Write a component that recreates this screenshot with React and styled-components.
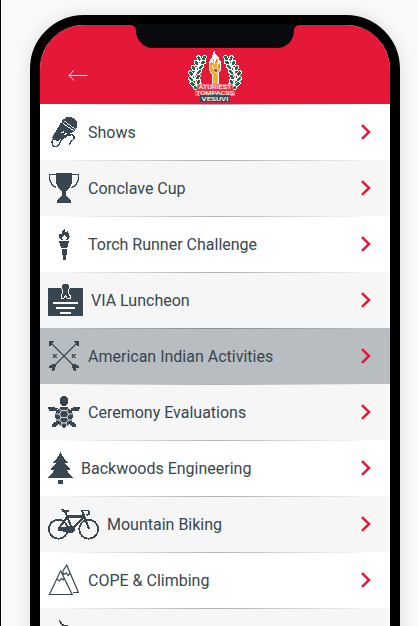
import styled, { createGlobalStyle, css } from 'styled-components';

const INK = '#374650';
const RED = '#e51937';

const MicIcon = () => (
  <Icon width="32" height="32" viewBox="0 0 32 32">
    <path d="M14 5 Q17 .8 21.5 1 Q28.6 1.4 29.2 8 Q29.2 12 26.6 14.6 L13.6 6 Z" />
    <path d="M13 6.4 L26 15.4 L20.8 18.4 L12 23.8 L10.6 25.4 L7 24.2 L4.2 21.4 Z" />
    <path d="M15.6 4.6 L26.8 12.8" stroke="#fff" strokeWidth="0.8" />
    <path d="M13.4 17 l3 -1.6 M16.4 18.8 l2.2 -1.2" stroke="#fff" strokeWidth="1.3" />
    <path
      d="M5.6 21.5 L4 26 Q4 31 8.4 30.4 Q11.6 29.6 12.2 25.8 Q13 23.6 19.6 19.6 Q25.6 17.4 26.4 21 Q26 24 22.6 26 L20.8 29.4"
      fill="none"
      stroke={INK}
      strokeWidth="1.3"
    />
  </Icon>
);

const CupIcon = () => (
  <Icon width="32" height="32" viewBox="0 0 32 32">
    <path d="M8 1 H24 V10 Q23 16 18 19 V23 L20 26 L23 28.5 V31 H9 V28.5 L12 26 L14 23 V19 Q9 16 8 10 Z" />
    <path
      d="M8 2.5 H1.5 V6 Q2 13 8.5 15.5 M24 2.5 H30.5 V6 Q30 13 23.5 15.5"
      fill="none"
      stroke={INK}
      strokeWidth="1.3"
    />
  </Icon>
);

const TorchIcon = () => (
  <Icon width="32" height="32" viewBox="0 0 32 32">
    <path d="M17.2 0 Q15.6 3 18 4.5 Q20 4 19 2.5 Q22 6 21.6 9 Q20.8 12 17.6 12.6 Q20.4 10 17 7 Q12.4 9.5 15.4 12.6 Q10.4 11.6 10.8 7.5 L12.2 5.4 L13.4 7 Q13.4 3 17.2 0 Z" />
    <path d="M11 13.4 H21 V15.4 H20.4 V17 L19 19.8 H13.2 L11.8 17 V15.4 H11 Z" />
    <path d="M13.6 20.5 H18.6 V26.5 H17.6 V32 H15 V26.5 H13.6 Z" />
  </Icon>
);

const CardIcon = () => (
  <Icon width="35" height="32" viewBox="0 0 35 32">
    <path d="M0 4 H35 V32 H0 Z" />
    <path
      d="M17.5 0 Q21.5 .3 21.5 4 L20.4 6.5 L20.6 9 L22 11.5 V14.5 H19.7 L17.5 12 L15.3 14.5 H13 V11.5 L14.4 9 L14.6 6.5 L13.5 4 Q13.5 .3 17.5 0 Z"
      stroke="#f6f6f6"
      strokeWidth="1"
    />
    <path d="M13.5 4 Q13.4 .3 17.5 0 Q21.6 .3 21.5 4 Z" />
    <path d="M5 19 H30 M8 24 H27 M12 29 H23" stroke="#fff" strokeWidth="1.8" />
  </Icon>
);

const ArrowsIcon = () => (
  <Icon width="32" height="32" viewBox="0 0 32 32">
    <path d="M1 1 H6.5 L4.8 3 L3 5.8 H1 Z M31 1 H25.5 L27.2 3 L29 5.8 H31 Z" />
    <path d="M1.5 26 L6.2 23.4 L8.4 25.4 L6.6 29.6 L4.4 31.5 V28 H1 Z M30.5 26 L25.8 23.4 L23.6 25.4 L25.4 29.6 L27.6 31.5 V28 H31 Z" />
    <path d="M3 3 L26.5 26.5 M29 3 L5.5 26.5" stroke={INK} strokeWidth="1.1" shapeRendering="auto" />
    <path
      d="M5.2 14.2 l3.6 3.6 m0 -3.6 l-3.6 3.6 M24 14.2 l3.6 3.6 m0 -3.6 l-3.6 3.6"
      stroke={INK}
      strokeWidth="1.5"
      shapeRendering="auto"
    />
  </Icon>
);

const TurtleIcon = () => (
  <Icon width="32" height="32" viewBox="0 0 32 32">
    <path d="M16 0 Q20.2 .5 20.2 4.5 Q20.2 9.5 16 10.2 Q11.8 9.5 11.8 4.5 Q11.8 .5 16 0 Z" />
    <path d="M0 11 L5 10.5 L9.5 12.5 L8.5 15.6 L4.5 14.8 L1 15 Z M32 11 L27 10.5 L22.5 12.5 L23.5 15.6 L27.5 14.8 L31 15 Z" />
    <path d="M3.6 31.4 L4.6 27.5 L8.5 25.2 L10.6 27.2 L8 30.4 Z M28.4 31.4 L27.4 27.5 L23.5 25.2 L21.4 27.2 L24 30.4 Z" />
    <path d="M13 11 H19 Q25.5 14.5 24.8 21 Q24 28 16 32 Q8 28 7.2 21 Q6.5 14.5 13 11 Z" />
    <path
      d="M10 11.5 L13.5 14.5 H18.5 L22 11.5 M13.5 14.5 L11.5 18 L13 21.5 H19 L20.5 18 L18.5 14.5 M11.5 18 H7 M20.5 18 H25 M13 21.5 L11.5 24 L14 27 H18 L20.5 24 L19 21.5 M11.5 24 L7.5 24 M20.5 24 H25 M14 27 L12.5 30.5 M18 27 L19.5 30.5"
      fill="none"
      stroke="#f6f6f6"
      strokeWidth="0.9"
      shapeRendering="auto"
    />
  </Icon>
);

const TreeIcon = () => (
  <Icon width="25" height="32" viewBox="0 0 25 32">
    <path d="M12.5 0 L14.4 4 L17.4 8 L20.6 10.4 L17 11.4 L19 14 L22.8 17.4 L19 18.4 L21.4 22 L25 25.6 H0 L3.6 22 L6 18.4 L2.2 17.4 L6 14 L8 11.4 L4.4 10.4 L7.6 8 L10.6 4 Z" />
    <path d="M10 28 H15 V32 H10 Z" />
  </Icon>
);

const BikeIcon = () => (
  <Icon width="51" height="32" viewBox="0 0 51 32">
    <g fill="none" stroke={INK} strokeWidth="1.8">
      <circle cx="10.3" cy="21.2" r="9.5" />
      <circle cx="40.7" cy="21.2" r="9.5" />
      <path d="M17 3 L24.5 22 M18.5 8.5 H35.5 M10.3 21 L18.8 9.5 M24 21.5 L36 8.8 M34 2.8 L41 21" strokeWidth="2.1" />
      <path d="M33 2.5 H39.5 Q42.3 3.2 41 6 L38.5 7" />
    </g>
    <path d="M13 1.2 L20.5 2 V3.6 H14.5 Z" />
    <path d="M9.6 20 L22 18 Q26 18 26.8 21 Q26.8 25 23 25 L9.6 22.6 Z" />
  </Icon>
);

const MountainIcon = () => (
  <Icon width="32" height="32" viewBox="0 0 32 32">
    <path
      d="M1.4 30.5 L12.6 6.8 L24.2 30.5 Z M14.8 6.8 L18.8 1.2 L30.4 28.5 H25 M8.8 15 L11.5 17 L13.2 14.5 L15.5 15.8 L16.2 13.5 M14.8 7 L15.5 10.5 L18.2 9 L20 11.5 L22.2 9"
      fill="none"
      stroke={INK}
      strokeWidth="1.2"
      shapeRendering="auto"
    />
  </Icon>
);

const HookIcon = () => (
  <Icon width="32" height="32" viewBox="0 0 32 32">
    <path d="M11.4 0.5 L14 4.4 Q16 6 20 5.6" fill="none" stroke={INK} strokeWidth="1.5" />
  </Icon>
);

const items = [
  { label: 'Shows', icon: MicIcon },
  { label: 'Conclave Cup', icon: CupIcon },
  { label: 'Torch Runner Challenge', icon: TorchIcon },
  { label: 'VIA Luncheon', icon: CardIcon },
  { label: 'American Indian Activities', icon: ArrowsIcon, active: true },
  { label: 'Ceremony Evaluations', icon: TurtleIcon },
  { label: 'Backwoods Engineering', icon: TreeIcon },
  { label: 'Mountain Biking', icon: BikeIcon },
  { label: 'COPE & Climbing', icon: MountainIcon },
  { label: '', icon: HookIcon },
];

// x, y, angle of the leaves on the left branch
const leaves = [
  [16, 8, 30], [11, 8.5, -20], [15, 12.5, 60], [8.5, 13, -30], [13, 17, 50],
  [5.5, 18, -30], [11, 22, 40], [3, 23.5, -30], [10, 27, 30], [3, 29, -40],
  [10.5, 32, 20], [4.5, 34, -50], [12.5, 36, 0], [8, 38, -60],
];

const Branch = () => (
  <g>
    <path d="M17 8 Q0 22 11 41" fill="none" stroke="#fff" strokeWidth="1.4" />
    {leaves.map(([x, y, r]) => (
      <ellipse
        key={`${x}-${y}`}
        cx={x}
        cy={y}
        rx="1.9"
        ry="3"
        transform={`rotate(${r} ${x} ${y})`}
        fill="#087443"
        stroke="#fff"
        strokeWidth="1"
      />
    ))}
  </g>
);

const Logo = () => (
  <LogoSvg width="54" height="53" viewBox="0 0 54 53">
    <Branch />
    <g transform="translate(54 0) scale(-1 1)">
      <Branch />
    </g>
    <path d="M24 23 H30 V34 H24 Z" fill="#f0b323" stroke="#fff" strokeWidth="1" />
    <path d="M26 0 L28 5 L31 7 V10 L33 12 V20 L30 25 H24 L21 20 V12 L24 7 Z" fill="#fff" />
    <path d="M25 9 L28 11 L30 8 L30 14 L32 13 V20 L29 25 H25 L22 20 V14 L24 11 L25 15 Z" fill="#f7a828" />
    <path d="M26 9 V14 M29 13 V17 M24 15 V18" stroke="#fff" strokeWidth="1" />
    <path d="M28 9 V12 M31 15 V18 M23 13 V15" stroke="#f47b20" strokeWidth="1" />
    <path d="M25 18 H29 V22 H27 L25 20 Z" fill="#e33b35" stroke="#fff" strokeWidth="0.7" />
    <path d="M10 34 H44 L47 45 H7 Z" fill="#e8323f" stroke="#f5a9ad" strokeWidth="0.6" />
    <path d="M12 45 H18 Q27 43 36 45 H42 V52 H12 Z" fill="#3d4852" />
    <path d="M18 45.4 Q27 44 36 45.4" fill="none" stroke="#087443" strokeWidth="0.9" />
    <LogoText x="27" y="38.7" textLength="33">ATURIEST</LogoText>
    <LogoText x="27" y="44.7" textLength="38">TOMPACSS</LogoText>
    <LogoText x="27" y="50.9" textLength="27">VESUVI</LogoText>
  </LogoSvg>
);

const App = () => {
  return (
    <Page>
      <GlobalStyle />
      <Phone>
        <Notch />
        <Header>
          <BackButton aria-label="Back">
            <svg width="20" height="12" viewBox="0 0 20 12" fill="none" stroke="#fff">
              <path d="M1 6.5 H19.5 M6 1 L1 6.5 L6 11.5" />
            </svg>
          </BackButton>
          <Logo />
        </Header>
        <List>
          {items.map(({ label, icon: ItemIcon, active }) => (
            <Item key={label} $active={active}>
              <ItemIcon />
              <Label>{label}</Label>
              {label && (
                <Chevron width="12" height="16" viewBox="0 0 12 16">
                  <path d="M2 1.2 L9 8 L2 14.8" />
                </Chevron>
              )}
            </Item>
          ))}
        </List>
      </Phone>
    </Page>
  );
};

const GlobalStyle = createGlobalStyle`
  * {
    box-sizing: border-box;
  }
  body {
    margin: 0;
    overflow: hidden;
    font-family: Roboto, sans-serif;
  }
`;

const Page = styled.div`
  height: 626px;
  padding: 15px 18px 0 29px;
  border-left: 1px solid #000;
  background: #fafafa;
  overflow: hidden;
`;

const Phone = styled.div`
  position: relative;
  width: 370px;
  height: 750px;
  border: 10px solid #000;
  border-radius: 54px;
  background: #fff;
  box-shadow: 0 0 18px rgba(0, 0, 0, 0.12);
`;

const Notch = styled.div`
  position: absolute;
  top: -1px;
  left: 96px;
  width: 158px;
  height: 24px;
  border-radius: 0 0 17px 17px;
  background: #080a0d;

  &::before,
  &::after {
    content: '';
    position: absolute;
    top: 1px;
    width: 5px;
    height: 5px;
  }
  &::before {
    left: -5px;
    background: radial-gradient(circle at 0 100%, transparent 4.5px, #080a0d 5px);
  }
  &::after {
    right: -5px;
    background: radial-gradient(circle at 100% 100%, transparent 4.5px, #080a0d 5px);
  }
`;

const Header = styled.header`
  display: grid;
  grid-template-columns: 1fr 54px 1fr;
  align-items: end;
  height: 79px;
  border-radius: 44px 44px 0 0;
  background: ${RED};
`;

const BackButton = styled.button`
  display: flex;
  justify-self: start;
  margin: 0 0 23px 28px;
  padding: 0;
  border: 0;
  background: none;
`;

const LogoSvg = styled.svg`
  grid-column: 2;
  display: block;
  margin-bottom: 1px;
  shape-rendering: crispEdges;
`;

const LogoText = styled.text.attrs({ textAnchor: 'middle', lengthAdjust: 'spacingAndGlyphs' })`
  fill: #fff;
  font-family: Roboto, sans-serif;
  font-size: 5px;
  font-weight: 500;
`;

const List = styled.ul`
  margin: 0;
  padding: 0;
  list-style: none;
`;

const Item = styled.li`
  display: flex;
  align-items: center;
  gap: 8px;
  height: 56px;
  padding: 0 18px 0 8px;
  background:
    linear-gradient(to right, transparent 4%, rgba(55, 70, 80, 0.4) 50%, transparent 96%)
      top / 100% 1px no-repeat,
    #fff;

  &:nth-child(even) {
    background-color: #f6f6f6;
  }

  ${({ $active }) =>
    $active &&
    css`
      background-color: #b8bdc1;
    `}
`;

const Icon = styled.svg`
  flex: none;
  fill: ${INK};
  shape-rendering: crispEdges;
`;

const Label = styled.span`
  flex: 1;
  padding-top: 2px;
  color: ${INK};
  font-size: 16px;
  line-height: 24px;
  white-space: nowrap;
`;

const Chevron = styled.svg`
  flex: none;
  fill: none;
  stroke: ${RED};
  stroke-width: 2.5;
`;

export default App;
